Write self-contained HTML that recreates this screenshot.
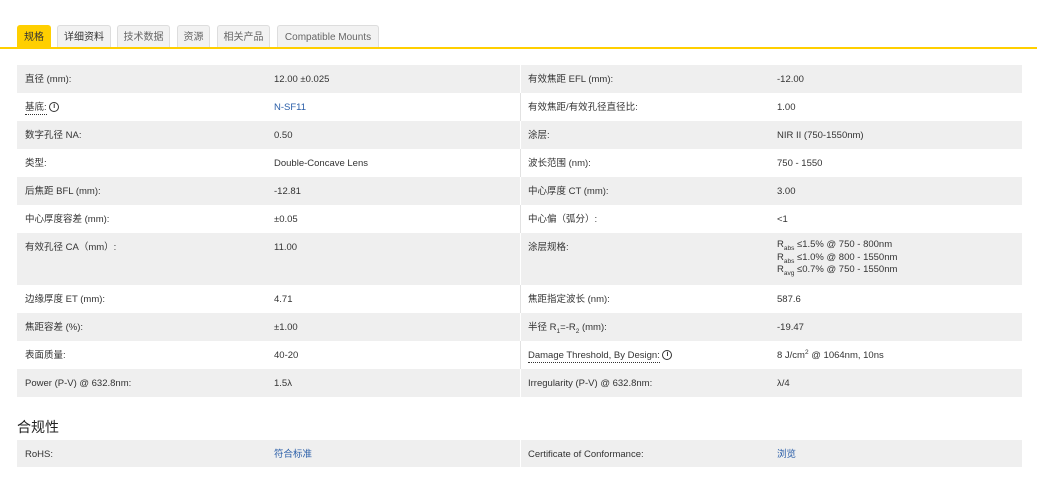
<!DOCTYPE html><html><head><meta charset="utf-8"><style>
body{margin:0;width:1037px;height:493px;background:#fff;font-family:"Liberation Sans","Noto Sans CJK SC",sans-serif;color:#333;font-size:9.5px;position:relative;overflow:hidden}
.tab{position:absolute;top:25px;height:22px;line-height:23px;background:#f2f2f2;border:1px solid #ddd;border-bottom:none;border-radius:3px 3px 0 0;font-size:10px;color:#666;text-align:center;box-sizing:border-box}
.tab.a{background:#ffcf00;border-color:#ffcf00;color:#333}
.line{position:absolute;top:47px;left:0;width:1037px;height:2px;background:#ffcf00}
.row{position:absolute;left:17px;width:1005px;height:28px}
.row.g{background:#efefef}
.row>span{position:absolute;top:1px;line-height:27px;height:27px;white-space:nowrap}
.c1{left:8px}.c2{left:257px}.c3{left:511px}.c4{left:760px}
.div{position:absolute;left:503px;top:0;bottom:0;width:1px;background:#fff}
.row:not(.g) .div{background:#e2e2e2}
a{color:#2a5ea8;text-decoration:none}
.u{border-bottom:1px dotted #333;line-height:12px;display:inline-block}
sub,sup{font-size:6.5px;line-height:0}
.i{display:inline-block;width:8px;height:8px;border:1px solid #333;border-radius:50%;font-size:7px;line-height:8px;text-align:center;font-weight:bold;vertical-align:middle}
</style></head><body>
<div class="tab a" style="left:17px;width:34px">规格</div>
<div class="tab" style="left:57px;width:54px;color:#333">详细资料</div>
<div class="tab" style="left:117px;width:53px">技术数据</div>
<div class="tab" style="left:177px;width:33px">资源</div>
<div class="tab" style="left:217px;width:53px">相关产品</div>
<div class="tab" style="left:277px;width:102px">Compatible Mounts</div>
<div class="line"></div>

<div class="row g" style="top:65px"><div class="div"></div><span class="c1">直径 (mm):</span><span class="c2">12.00 ±0.025</span><span class="c3">有效焦距 EFL (mm):</span><span class="c4">-12.00</span></div>
<div class="row" style="top:93px"><div class="div"></div><span class="c1"><span class="u">基底:</span> <span class="i">i</span></span><span class="c2"><a>N-SF11</a></span><span class="c3">有效焦距/有效孔径直径比:</span><span class="c4">1.00</span></div>
<div class="row g" style="top:121px"><div class="div"></div><span class="c1">数字孔径 NA:</span><span class="c2">0.50</span><span class="c3">涂层:</span><span class="c4">NIR II (750-1550nm)</span></div>
<div class="row" style="top:149px"><div class="div"></div><span class="c1">类型:</span><span class="c2">Double-Concave Lens</span><span class="c3">波长范围 (nm):</span><span class="c4">750 - 1550</span></div>
<div class="row g" style="top:177px"><div class="div"></div><span class="c1">后焦距 BFL (mm):</span><span class="c2">-12.81</span><span class="c3">中心厚度 CT (mm):</span><span class="c4">3.00</span></div>
<div class="row" style="top:205px"><div class="div"></div><span class="c1">中心厚度容差 (mm):</span><span class="c2">±0.05</span><span class="c3">中心偏（弧分）:</span><span class="c4">&lt;1</span></div>
<div class="row g" style="top:233px;height:52px"><div class="div"></div><span class="c1">有效孔径 CA（mm）:</span><span class="c2">11.00</span><span class="c3">涂层规格:</span><span class="c4" style="top:6px;line-height:12.5px;height:auto">R<sub>abs</sub> ≤1.5% @ 750 - 800nm<br>R<sub>abs</sub> ≤1.0% @ 800 - 1550nm<br>R<sub>avg</sub> ≤0.7% @ 750 - 1550nm</span></div>
<div class="row" style="top:285px"><div class="div"></div><span class="c1">边缘厚度 ET (mm):</span><span class="c2">4.71</span><span class="c3">焦距指定波长 (nm):</span><span class="c4">587.6</span></div>
<div class="row g" style="top:313px"><div class="div"></div><span class="c1">焦距容差 (%):</span><span class="c2">±1.00</span><span class="c3">半径 R<sub>1</sub>=-R<sub>2</sub> (mm):</span><span class="c4">-19.47</span></div>
<div class="row" style="top:341px"><div class="div"></div><span class="c1">表面质量:</span><span class="c2">40-20</span><span class="c3"><span class="u">Damage Threshold, By Design:</span> <span class="i">i</span></span><span class="c4">8 J/cm<sup>2</sup> @ 1064nm, 10ns</span></div>
<div class="row g" style="top:369px"><div class="div"></div><span class="c1">Power (P-V) @ 632.8nm:</span><span class="c2">1.5λ</span><span class="c3">Irregularity (P-V) @ 632.8nm:</span><span class="c4">λ/4</span></div>

<div style="position:absolute;left:17px;top:417px;font-size:14px;color:#222">合规性</div>
<div class="row g" style="top:440px;height:27px"><div class="div"></div><span class="c1">RoHS:</span><span class="c2"><a>符合标准</a></span><span class="c3">Certificate of Conformance:</span><span class="c4"><a>浏览</a></span></div>
</body></html>
